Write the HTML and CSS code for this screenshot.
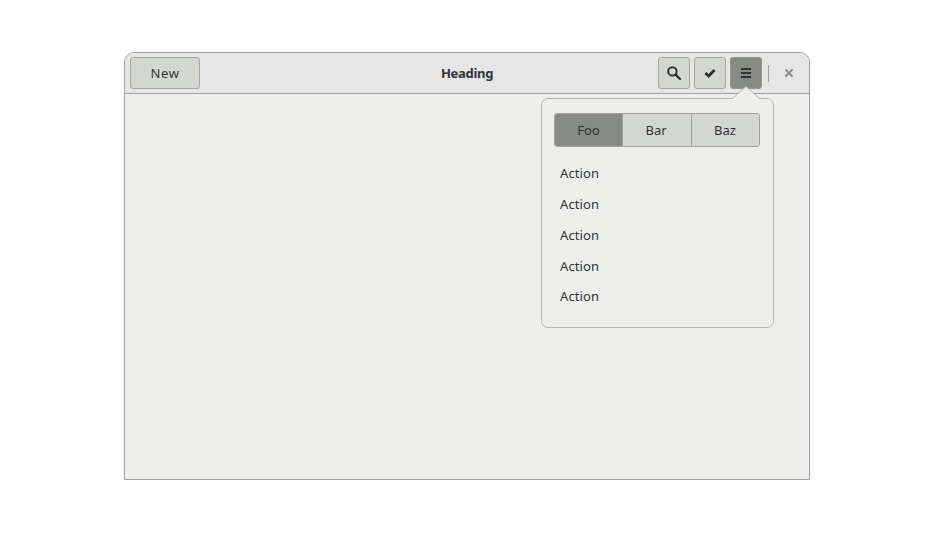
FILE: index.html
```html
<!DOCTYPE html>
<html lang="en">
<head>
<meta charset="utf-8">
<title>Heading</title>
<link rel="stylesheet" href="styles.css">
</head>
<body>
<main class="window">
  <header class="headerbar">
    <div class="start"><button class="button new">New</button></div>
    <h1 class="title">Heading</h1>
    <div class="end">
      <button class="button icon" aria-label="Search"><svg width="16" height="16" viewBox="0 0 16 16"><circle cx="6.4" cy="6.4" r="4.2" fill="none" stroke="currentColor" stroke-width="2"/><path d="M9.5 9.5 14 14" stroke="currentColor" stroke-width="2.4" stroke-linecap="round"/></svg></button>
      <button class="button icon" aria-label="Select"><svg width="16" height="16" viewBox="0 0 16 16"><path d="M3.5 8 6.7 11 12.6 5" fill="none" stroke="currentColor" stroke-width="3"/></svg></button>
      <button class="button icon active" aria-label="Menu"><svg width="16" height="16" viewBox="0 0 16 16"><path d="M3 3h10v2H3zM3 7h10v2H3zM3 11h10v2H3z" fill="currentColor"/></svg></button>
      <span class="separator"></span>
      <button class="close" aria-label="Close"><svg width="16" height="16" viewBox="0 0 16 16"><path d="m4.4 4.4 7.2 7.2m0-7.2-7.2 7.2" fill="none" stroke="currentColor" stroke-width="2"/></svg></button>
    </div>
  </header>
  <section class="popover">
    <svg class="arrow" width="30" height="14" viewBox="0 0 30 14"><path d="M0 14V13H1L15 .5 29 13H30V14z" fill="#eeeeec"/><path d="M0 12.5H1.3L15 .6 28.7 12.5H30" fill="none" stroke="#b7b8b6"/></svg>
    <div class="segments">
      <button class="segment selected">Foo</button>
      <button class="segment">Bar</button>
      <button class="segment">Baz</button>
    </div>
    <ul class="actions">
      <li>Action</li>
      <li>Action</li>
      <li>Action</li>
      <li>Action</li>
      <li>Action</li>
    </ul>
  </section>
</main>
</body>
</html>
```
FILE: styles.css
```css
* { box-sizing: border-box; }
body {
  margin: 0;
  padding: 52px 124px;
  background: #fff;
  color: #2e3436;
  font: 13px/20px "Noto Sans", sans-serif;
}
button {
  margin: 0;
  padding: 0;
  font: inherit;
  color: inherit;
}
.window {
  position: relative;
  width: 686px;
  height: 428px;
  border: 1px solid #a1a1a0;
  border-radius: 10px 10px 0 0;
  background: #eeeeec;
}
.headerbar {
  display: grid;
  grid-template-columns: 1fr auto 1fr;
  align-items: center;
  height: 41px;
  padding: 0 5px;
  border-bottom: 1px solid #a1a1a0;
  border-radius: 9px 9px 0 0;
  background: #e6e6e6;
}
.start, .end { display: flex; align-items: center; }
.end { justify-content: flex-end; }
.title { margin: 0; font-size: 13px; font-weight: 700; letter-spacing: -0.3px; }
.button {
  display: flex;
  align-items: center;
  justify-content: center;
  height: 32px;
  border: 1px solid #a6a8a3;
  border-radius: 3px;
  background: #d3d7cf;
}
.new { width: 70px; letter-spacing: 0.6px; }
.icon { width: 32px; margin-right: 4px; }
.active { background: #888a85; border-color: #949692; }
.separator {
  width: 1px;
  height: 17px;
  margin: 0 4px 0 2px;
  background: #a1a1a0;
}
.close {
  display: flex;
  align-items: center;
  justify-content: center;
  width: 31px;
  height: 32px;
  border: 0;
  background: none;
  color: #888a85;
}
.popover {
  position: absolute;
  top: 45px;
  left: 416px;
  width: 233px;
  height: 230px;
  padding: 14px 13px 13px 12px;
  border: 1px solid #b7b8b6;
  border-radius: 7px;
  background: #eeeeec;
}
.arrow { position: absolute; top: -13px; left: 189px; }
.segments {
  display: grid;
  grid-template-columns: 68px 69px 67px;
  height: 34px;
  border: 1px solid #a1a1a0;
  border-radius: 3px;
  overflow: hidden;
  letter-spacing: 0.3px;
}
.segment {
  padding-right: 2px;
  border: 0;
  border-right: 1px solid #a1a1a0;
  background: #d3d7cf;
}
.segment:last-child { padding-right: 1px; border-right: 0; }
.selected { padding-right: 0; background: #888a85; }
.actions { margin: 11px 0 0; padding: 0 6px; list-style: none; }
.actions li { height: 30.85px; line-height: 31px; letter-spacing: 0.1px; }
```
